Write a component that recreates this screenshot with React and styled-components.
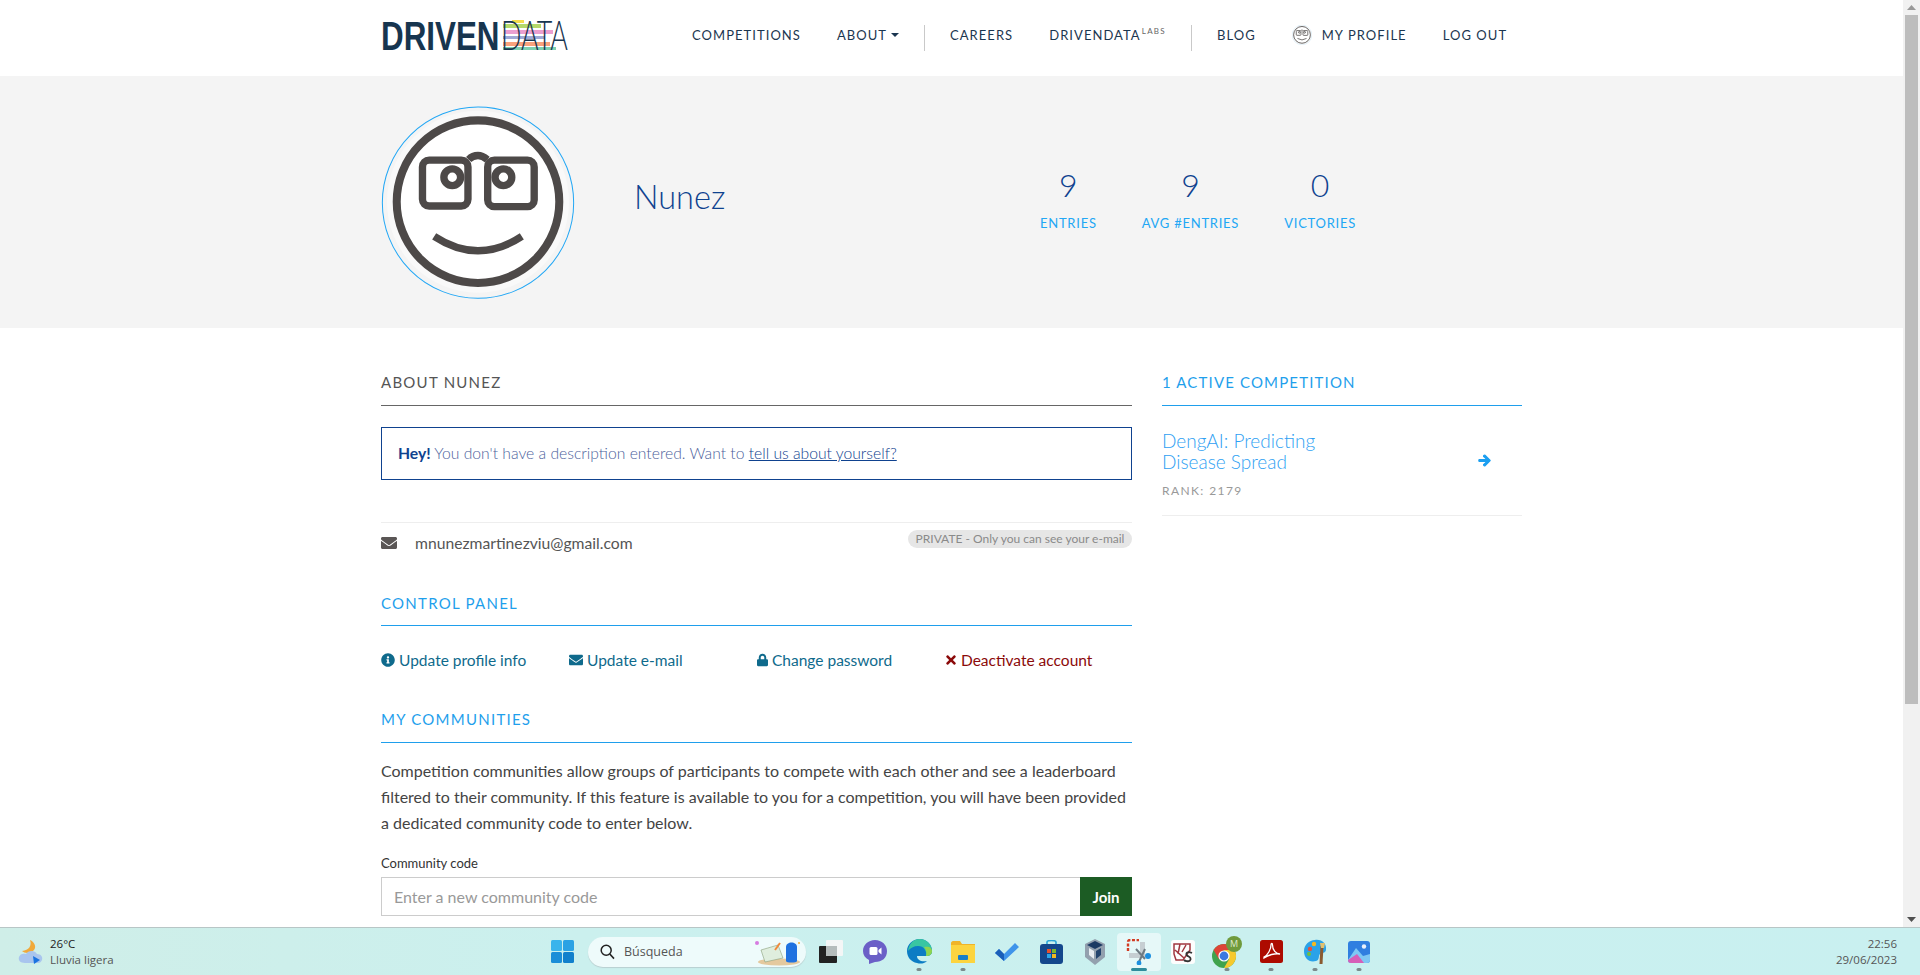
import React from 'react'
import styled, { createGlobalStyle } from 'styled-components'
import { FaEnvelope, FaInfoCircle, FaLock, FaTimes, FaArrowRight } from 'react-icons/fa'

const GlobalStyle = createGlobalStyle`
  html, body {
    margin: 0;
    padding: 0;
    height: 100%;
    overflow: hidden;
    background: #fff;
  }
  #root { height: 100%; }
  * { box-sizing: border-box; }
`

const BASE_FONT = `Lato, "Open Sans", sans-serif`
const WIN_FONT = `"Open Sans", "Noto Sans", sans-serif`

const Screen = styled.div`
  height: 975px;
  display: flex;
  flex-direction: column;
  font-family: ${BASE_FONT};
`
const Viewport = styled.div`
  height: 927px;
  display: flex;
`
const Page = styled.div`
  flex: 1;
  overflow: hidden;
`

/* fake scrollbar */
const ScrollTrack = styled.div`
  width: 17px;
  background: #f1f1f1;
  display: flex;
  flex-direction: column;
  align-items: stretch;
`
const ScrollArrow = styled.div`
  height: 15px;
  display: flex;
  align-items: center;
  justify-content: center;
  svg { display: block; fill: ${p => p.$color}; }
`
const ScrollThumb = styled.div`
  height: 689px;
  margin: 0 2px;
  background: #bdbdbd;
`
const ScrollRest = styled.div`
  flex: 1;
`

/* nav */
const Nav = styled.nav`
  height: 76px;
  padding: 0 0 6px 381px;
  display: flex;
  align-items: center;
  background: #fff;
`
const NavList = styled.div`
  margin-left: 124px;
  display: flex;
  align-items: center;
  gap: 36px;
`
const NavItem = styled.a`
  display: flex;
  align-items: center;
  gap: ${p => p.$gap || 0}px;
  font-size: 13px;
  line-height: 20px;
  letter-spacing: 1.05px;
  color: #1b3650;
  white-space: nowrap;
`
const Caret = styled.span`
  display: inline-block;
  margin-left: 4px;
  width: 0;
  height: 0;
  border-left: 4px solid transparent;
  border-right: 4px solid transparent;
  border-top: 4px solid #1b3650;
`
const LabsMark = styled.sup`
  font-size: 8px;
  line-height: 8px;
  letter-spacing: 1.3px;
  color: #666;
  margin: -9px 0 0 1px;
`
const NavDivider = styled.span`
  width: 1px;
  height: 26px;
  margin: 6px -11px 0;
  background: #c9c9c9;
`

/* hero */
const Hero = styled.section`
  height: 252px;
  background: #f4f4f4;
  padding-left: 381px;
  display: flex;
  align-items: flex-start;
`
const AvatarWrap = styled.div`
  width: 194px;
  height: 194px;
  margin-top: 30px;
  svg { display: block; }
`
const UserName = styled.h1`
  margin: 98px 0 0 59px;
  width: 406px;
  font-size: 32.5px;
  line-height: 46px;
  font-weight: 300;
  color: #0f428f;
`
const Stats = styled.div`
  margin-top: 89px;
  display: flex;
  gap: 45px;
`
const Stat = styled.div`
  display: flex;
  flex-direction: column;
  align-items: center;
`
const StatValue = styled.div`
  font-size: 32px;
  line-height: 40px;
  font-weight: 300;
  color: #0f428f;
`
const StatLabel = styled.div`
  margin-top: 9px;
  font-size: 13px;
  line-height: 18px;
  letter-spacing: 0.75px;
  color: #22a7f5;
  white-space: nowrap;
`

/* content columns */
const Columns = styled.div`
  padding-left: 381px;
  display: grid;
  grid-template-columns: 751px 360px;
  column-gap: 30px;
`
const Column = styled.div`
  min-width: 0;
`
const SectionHead = styled.h2`
  margin: ${p => p.$top}px 0 0;
  padding-bottom: ${p => p.$pad || 10}px;
  border-bottom: 1px solid ${p => (p.$muted ? '#666' : '#1f9fec')};
  font-size: 15px;
  line-height: 26px;
  font-weight: 400;
  letter-spacing: ${p => p.$spacing || 1.25}px;
  color: ${p => (p.$muted ? '#555' : '#1f9fec')};
`
const Notice = styled.div`
  margin-top: 21px;
  height: 53px;
  padding: 0 0 2px 16px;
  display: flex;
  align-items: center;
  border: 1px solid #0f428f;
  font-size: 15.7px;
  font-weight: 300;
  color: #4d5f9c;
  white-space: pre;
  strong { font-weight: 700; color: #0f428f; }
  a { color: #0f428f; text-decoration: underline; }
`
const EmailRow = styled.div`
  margin-top: 42px;
  height: 44px;
  border-top: 1px solid #eee;
  display: flex;
  align-items: flex-start;
  justify-content: space-between;
`
const EmailAddress = styled.div`
  margin-top: 9px;
  display: flex;
  align-items: center;
  gap: 18px;
  font-size: 15.7px;
  line-height: 22px;
  color: #555;
  svg { width: 16px; height: 16px; color: #5a5655; }
`
const PrivateBadge = styled.span`
  margin-top: 7px;
  height: 18px;
  width: 224px;
  border-radius: 9px;
  background: #e6e6e6;
  font-size: 12px;
  line-height: 18px;
  text-align: center;
  color: #8a8a8a;
  white-space: nowrap;
`
const ControlLinks = styled.div`
  margin-top: 23px;
  display: grid;
  grid-template-columns: repeat(4, 188px);
`
const ControlLink = styled.a`
  height: 22px;
  display: flex;
  align-items: center;
  gap: 4px;
  font-size: 15.5px;
  color: ${p => (p.$danger ? '#8b0a0a' : '#0f6a8c')};
  white-space: nowrap;
  svg { width: ${p => p.$icon || 14}px; height: 14px; flex: none; }
`
const Paragraph = styled.p`
  margin: 15px 0 0;
  font-size: 16px;
  line-height: 26px;
  color: #444;
  white-space: nowrap;
`
const FieldLabel = styled.label`
  display: block;
  margin-top: 18px;
  font-size: 13px;
  line-height: 18px;
  color: #333;
`
const JoinRow = styled.div`
  margin-top: 5px;
  display: flex;
  height: 39px;
`
const CodeInput = styled.input`
  flex: 1;
  min-width: 0;
  padding: 0 12px;
  border: 1px solid #ccc;
  border-right: 0;
  outline: 0;
  font-family: ${BASE_FONT};
  font-size: 16px;
  color: #333;
  &::placeholder { color: #999; opacity: 1; }
`
const JoinButton = styled.button`
  width: 52px;
  border: 0;
  background: #1c5c24;
  color: #fff;
  font-family: ${BASE_FONT};
  font-size: 15px;
  font-weight: 700;
`

/* side */
const CompetitionItem = styled.div`
  margin-top: 24px;
  padding-bottom: 16px;
  border-bottom: 1px solid #eee;
  display: flex;
`
const CompetitionText = styled.div`
  width: 316px;
`
const CompetitionTitle = styled.a`
  display: block;
  font-size: 19px;
  line-height: 21px;
  font-weight: 300;
  color: #2f9ff3;
`
const Rank = styled.div`
  margin-top: 11px;
  font-size: 12px;
  line-height: 16px;
  letter-spacing: 1.4px;
  color: #999;
`
const GoArrow = styled(FaArrowRight)`
  width: 13px;
  height: 13px;
  margin-top: 24px;
  color: #1c9ff0;
  stroke: currentColor;
  stroke-width: 40;
`

/* windows taskbar */
const Taskbar = styled.footer`
  height: 48px;
  border-top: 1px solid #b8c6c6;
  background: linear-gradient(90deg, #cfeee8 0%, #cbf0ee 30%, #c9f0f0 100%);
  display: grid;
  grid-template-columns: 540px 1fr 140px;
  align-items: center;
  font-family: ${WIN_FONT};
`
const Weather = styled.div`
  padding-left: 18px;
  display: flex;
  align-items: center;
  gap: 6px;
  svg { display: block; }
`
const TrayText = styled.div`
  font-size: 11.5px;
  line-height: 16px;
  color: ${p => (p.$dark ? '#222' : '#555')};
`
const TaskIcons = styled.div`
  height: 100%;
  display: flex;
  align-items: center;
`
const TaskButton = styled.div`
  position: relative;
  width: 44px;
  height: 38px;
  display: flex;
  align-items: center;
  justify-content: center;
  border-radius: 4px;
  background: ${p => (p.$active ? '#e6f8f8' : 'transparent')};
  svg { display: block; }
  &::after {
    content: '';
    display: ${p => (p.$dot || p.$active ? 'block' : 'none')};
    position: absolute;
    left: 50%;
    bottom: 0;
    transform: translateX(-50%);
    width: ${p => (p.$active ? 16 : 5)}px;
    height: 3px;
    border-radius: 2px;
    background: ${p => (p.$active ? '#2e8c9c' : '#7b8a8c')};
  }
`
const SearchBox = styled.div`
  width: 218px;
  height: 30px;
  margin: 0 3px 0 4px;
  padding: 0 5px 0 12px;
  border-radius: 15px;
  background: #eefbfb;
  box-shadow: 0 1px 1px #b9cfd0;
  display: flex;
  align-items: center;
  font-size: 12.5px;
  color: #555;
  svg { display: block; flex: none; }
`
const SearchLabel = styled.span`
  margin-left: 9px;
  flex: 1;
`
const Clock = styled.div`
  padding-right: 23px;
  text-align: right;
`

const Avatar = ({ size }) => (
  <svg width={size} height={size} viewBox="34 32 580 580">
    <circle cx="324" cy="321" r="286" fill="#f4f4f4" stroke="#22a7f5" strokeWidth="3" />
    <circle cx="324" cy="318" r="272" fill="#f9f9f9" />
    <circle cx="324" cy="318" r="243" fill="#fff" stroke="#4d4948" strokeWidth="24" />
    <g fill="none" stroke="#4d4948" strokeWidth="22">
      <rect x="158" y="194" width="136" height="137" rx="20" />
      <rect x="353" y="194" width="139" height="139" rx="20" />
      <path d="M296 192 C306 182 316 180 324 180 C334 180 342 184 352 192" />
      <circle cx="247" cy="245" r="25" fill="#fff" />
      <circle cx="400" cy="245" r="25" fill="#fff" />
      <path d="M193 422 Q324 508 455 422" />
    </g>
  </svg>
)

const Logo = () => (
  <svg width="187" height="30" viewBox="0 0 187 30">
    <rect x="131" y="0" width="12" height="3" fill="#f5dc4c" />
    <rect x="122" y="4" width="38" height="4" fill="#b5d96b" />
    <rect x="124" y="10" width="48" height="4" fill="#ea9fd0" />
    <rect x="122" y="16" width="42" height="3" fill="#9fa9d6" />
    <rect x="122" y="22" width="47" height="4" fill="#f9a27c" />
    <rect x="122" y="27" width="53" height="3" fill="#7fd0b0" />
    <text transform="translate(0 30) scale(.765 1)" fontFamily="Liberation Sans" fontWeight="700" fontSize="41" fill="#17354f">DRIVEN</text>
    <text transform="translate(120 30) scale(.655 1)" fontFamily="Lato" fontWeight="300" fontSize="41" fill="#17354f">DATA</text>
  </svg>
)

const WeatherIcon = () => (
  <svg width="26" height="26" viewBox="0 0 26 26">
    <path d="M12 1 C14 7 11 11 4 12 C7 15 15 15 17 9 C18 6 15 2 12 1Z" fill="#f0a93a" />
    <path d="M7 24 C2 24 0 21 1 18 C2 15 5 14 8 15 C10 11 17 11 19 15 C23 15 25 18 24 21 C23 23 22 24 20 24Z" fill="#a9c5ee" />
    <path d="M15 17 L22 21 L16 25Z" fill="#1a73e0" />
  </svg>
)
const WindowsIcon = () => (
  <svg width="23" height="23" viewBox="0 0 23 23">
    <rect width="11" height="11" rx="1.5" fill="#3ab4ec" />
    <rect x="12" width="11" height="11" rx="1.5" fill="#2aa2e4" />
    <rect y="12" width="11" height="11" rx="1.5" fill="#1b8ed8" />
    <rect x="12" y="12" width="11" height="11" rx="1.5" fill="#1080cc" />
  </svg>
)
const SearchGlyph = () => (
  <svg width="15" height="16" viewBox="0 0 15 16">
    <circle cx="6.2" cy="6.2" r="5" fill="none" stroke="#222" strokeWidth="1.5" />
    <path d="M9.8 10 L14 14.6" stroke="#222" strokeWidth="1.6" />
  </svg>
)
const SearchArt = () => (
  <svg width="46" height="28" viewBox="0 0 46 28">
    <ellipse cx="24" cy="24" rx="21" ry="3.5" fill="#e4c99e" />
    <path d="M6 12 L23 7 L28 20 L10 24Z" fill="#dfeede" stroke="#8aa07a" strokeWidth=".6" />
    <path d="M20 12 L25 5" stroke="#f08a3c" strokeWidth="2" />
    <path d="M31 9 C31 3 42 3 42 9 V23 C42 25 31 25 31 23Z" fill="#1f72e0" />
    <circle cx="2" cy="5" r="2" fill="#d67be0" />
    <circle cx="44" cy="5" r="1" fill="#f4b53c" />
  </svg>
)
const TaskViewIcon = () => (
  <svg width="24" height="23" viewBox="0 0 24 23">
    <rect x="7" y="0" width="17" height="16" rx="1" fill="#f4f6f6" />
    <rect x="0" y="6" width="18" height="17" rx="1" fill="#222" />
    <rect x="7" y="6" width="11" height="10" fill="#b5bcbc" />
  </svg>
)
const MeetIcon = () => (
  <svg width="24" height="24" viewBox="0 0 24 24">
    <path d="M12 0 C19 0 24 5 24 11 C24 18 19 22 12 22 L6 24 V20 C2 18 0 15 0 11 C0 5 5 0 12 0Z" fill="#6b5fc7" />
    <rect x="6.5" y="7" width="8" height="8" rx="1.5" fill="#fff" />
    <path d="M15.5 10 L18.5 7.5 V14.5 L15.5 12Z" fill="#fff" />
  </svg>
)
const EdgeIcon = () => (
  <svg width="25" height="25" viewBox="0 0 25 25">
    <path d="M12.5 0 C20 0 25 6 25 12 C25 16 22 17 19 17 H10 C10 21 14 23 20 22 C17 25 13 25 10 24 C4 23 0 18 0 12 C0 5 6 0 12.5 0Z" fill="#0c7cc4" />
    <path d="M12.5 0 C20 0 25 6 25 12 C25 16 22 17 19 17 C20 12 17 7 11 7 C7 7 3 9 1 12 C2 5 6 0 12.5 0Z" fill="#39c6a2" />
    <path d="M25 12 C25 16 22 17 19 17 C20 14 19 10 17 8 C21 7 25 8 25 12Z" fill="#8fd44f" />
  </svg>
)
const FolderIcon = () => (
  <svg width="24" height="22" viewBox="0 0 24 22">
    <path d="M0 2 C0 1 1 0 2 0 H9 L11 3 H24 V22 H0Z" fill="#f0b429" />
    <rect y="4" width="24" height="18" fill="#fcd43f" />
    <rect x="7" y="14" width="10" height="5" rx="1" fill="#1a7fc8" />
  </svg>
)
const TodoIcon = () => (
  <svg width="24" height="18" viewBox="0 0 24 18">
    <path d="M0 10 L4 6 L9 11 L20 0 L24 4 L9 18Z" fill="#3f94ea" />
    <path d="M0 10 L4 6 L9 11 L9 18Z" fill="#1b5fb8" />
  </svg>
)
const StoreIcon = () => (
  <svg width="23" height="24" viewBox="0 0 23 24">
    <path d="M7 5 V2 C7 0 16 0 16 2 V5" fill="none" stroke="#2ba5d8" strokeWidth="1.6" />
    <rect y="4" width="23" height="20" rx="3" fill="#14478c" />
    <rect x="7" y="9" width="4" height="4" fill="#e8502c" />
    <rect x="12" y="9" width="4" height="4" fill="#7cb82c" />
    <rect x="7" y="14" width="4" height="4" fill="#2ba5e8" />
    <rect x="12" y="14" width="4" height="4" fill="#f4b820" />
  </svg>
)
const VBoxIcon = () => (
  <svg width="20" height="26" viewBox="0 0 20 26">
    <path d="M10 0 L20 5 V18 L10 26 L0 18 V5Z" fill="#93a0ae" />
    <path d="M10 2 L18 6 L10 10 L2 6Z" fill="#1c3a63" />
    <path d="M4 9 L9 12 V20 L4 16Z" fill="#e8edf2" />
    <path d="M16 9 L11 12 V20 L16 16Z" fill="#24446e" />
  </svg>
)
const SnipIcon = () => (
  <svg width="26" height="26" viewBox="0 0 26 26">
    <path d="M2 12 V3 Q2 1 4 1 H13" fill="none" stroke="#d23b22" strokeWidth="2.4" strokeDasharray="3 1.6" />
    <path d="M3 14 H14 V3 H19 V19 H3Z" fill="#c6ced2" />
    <path d="M10 10 L19 20 M19 10 L12 25" stroke="#6e7a82" strokeWidth="2" />
    <circle cx="22" cy="17" r="3" fill="#1c8fe0" />
    <circle cx="13" cy="24" r="2.4" fill="#1c8fe0" />
  </svg>
)
const KsIcon = () => (
  <svg width="24" height="24" viewBox="0 0 24 24">
    <rect width="24" height="24" rx="3" fill="#fdfdfd" />
    <path d="M3 4 H19 V10 L12 20 H5 L3 14Z M4 10 L13 18 M9 4 L7 14 M15 5 L11 12" fill="none" stroke="#a0363f" strokeWidth="1.5" />
    <path d="M21 13 C17 11 14 13 16 15.5 C18 17 21 18 19 20.5 C17 22 14 21 13 20" fill="none" stroke="#333" strokeWidth="1.8" />
  </svg>
)
const ChromeIcon = () => (
  <svg width="30" height="32" viewBox="0 0 30 32">
    <circle cx="12" cy="20" r="12" fill="#3fa34d" />
    <path d="M12 8 A12 12 0 0 1 22.4 14 L12 14 L6.8 23 L1.6 14 A12 12 0 0 1 12 8Z" fill="#dd4436" />
    <path d="M22.4 14 A12 12 0 0 1 12 32 L17.2 23 L12 14Z" fill="#f6c92e" />
    <circle cx="12" cy="20" r="5.6" fill="#fff" />
    <circle cx="12" cy="20" r="4.4" fill="#3c78e0" />
    <circle cx="22" cy="8" r="8" fill="#6f9a3c" />
    <text x="22" y="11" textAnchor="middle" fontSize="9" fontFamily="Open Sans" fill="#dfe8cc">M</text>
  </svg>
)
const AcrobatIcon = () => (
  <svg width="23" height="23" viewBox="0 0 23 23">
    <rect width="23" height="23" rx="2.5" fill="#ad0b00" />
    <path d="M4 17 C8 15 11 9 11 5 C11 3 12.5 3 12.5 5 C12.5 10 16 14 20 14 C15 13 8 15 4 18Z" fill="none" stroke="#fff" strokeWidth="1.3" />
  </svg>
)
const PaintIcon = () => (
  <svg width="23" height="25" viewBox="0 0 23 25">
    <path d="M11 1 C18 0 23 5 22 11 C21 15 18 13 16 15 C14 17 16 21 12 22 C5 24 0 19 0 12 C0 6 5 1 11 1Z" fill="#2aa2e8" />
    <circle cx="6" cy="10" r="2.2" fill="#e84f3c" />
    <circle cx="10" cy="5" r="2.2" fill="#f4b820" />
    <circle cx="5" cy="15" r="2" fill="#6fc03c" />
    <path d="M18 7 L17 25" stroke="#8a5a30" strokeWidth="3" />
    <path d="M16 4 H21 L20 9 H17Z" fill="#e0c070" />
  </svg>
)
const PhotosIcon = () => (
  <svg width="22" height="22" viewBox="0 0 22 22">
    <rect width="22" height="22" rx="3" fill="#2f7fe0" />
    <circle cx="16" cy="5.5" r="2.2" fill="#e8f0fb" />
    <path d="M0 19 L8 7 L15 15 L22 13 V19 Q22 22 19 22 H3 Q0 22 0 19Z" fill="#7ec8f4" />
    <path d="M0 19 L9 13 L16 22 H3 Q0 22 0 19Z" fill="#d65fb8" />
  </svg>
)

const TASK_ICONS = [
  { Icon: TaskViewIcon },
  { Icon: MeetIcon },
  { Icon: EdgeIcon, dot: true },
  { Icon: FolderIcon, dot: true },
  { Icon: TodoIcon },
  { Icon: StoreIcon },
  { Icon: VBoxIcon },
  { Icon: SnipIcon, active: true },
  { Icon: KsIcon },
  { Icon: ChromeIcon, dot: true },
  { Icon: AcrobatIcon, dot: true },
  { Icon: PaintIcon, dot: true },
  { Icon: PhotosIcon, dot: true },
]

const STATS = [
  { value: 9, label: 'ENTRIES' },
  { value: 9, label: 'AVG #ENTRIES' },
  { value: 0, label: 'VICTORIES' },
]

export default function App() {
  return (
    <Screen>
      <GlobalStyle />
      <Viewport>
        <Page>
          <Nav>
            <Logo />
            <NavList>
              <NavItem>COMPETITIONS</NavItem>
              <NavItem>ABOUT<Caret /></NavItem>
              <NavDivider />
              <NavItem>CAREERS</NavItem>
              <NavItem>DRIVENDATA<LabsMark>LABS</LabsMark></NavItem>
              <NavDivider />
              <NavItem>BLOG</NavItem>
              <NavItem $gap={10}><Avatar size={20} />MY PROFILE</NavItem>
              <NavItem>LOG OUT</NavItem>
            </NavList>
          </Nav>
          <Hero>
            <AvatarWrap><Avatar size={194} /></AvatarWrap>
            <UserName>Nunez</UserName>
            <Stats>
              {STATS.map(stat => (
                <Stat key={stat.label}>
                  <StatValue>{stat.value}</StatValue>
                  <StatLabel>{stat.label}</StatLabel>
                </Stat>
              ))}
            </Stats>
          </Hero>
          <Columns>
            <Column>
              <SectionHead $top={41} $muted>ABOUT NUNEZ</SectionHead>
              <Notice>
                <strong>Hey!</strong> You don't have a description entered. Want to <a>tell us about yourself?</a>
              </Notice>
              <EmailRow>
                <EmailAddress><FaEnvelope />mnunezmartinezviu@gmail.com</EmailAddress>
                <PrivateBadge>PRIVATE - Only you can see your e-mail</PrivateBadge>
              </EmailRow>
              <SectionHead $top={24} $pad={9}>CONTROL PANEL</SectionHead>
              <ControlLinks>
                <ControlLink><FaInfoCircle />Update profile info</ControlLink>
                <ControlLink><FaEnvelope />Update e-mail</ControlLink>
                <ControlLink $icon={11}><FaLock />Change password</ControlLink>
                <ControlLink $danger $icon={12}><FaTimes />Deactivate account</ControlLink>
              </ControlLinks>
              <SectionHead $top={35}>MY COMMUNITIES</SectionHead>
              <Paragraph>
                Competition communities allow groups of participants to compete with each other and see a leaderboard<br />
                filtered to their community. If this feature is available to you for a competition, you will have been provided<br />
                a dedicated community code to enter below.
              </Paragraph>
              <FieldLabel>Community code</FieldLabel>
              <JoinRow>
                <CodeInput placeholder="Enter a new community code" />
                <JoinButton>Join</JoinButton>
              </JoinRow>
            </Column>
            <Column>
              <SectionHead $top={41} $spacing={1.15}>1 ACTIVE COMPETITION</SectionHead>
              <CompetitionItem>
                <CompetitionText>
                  <CompetitionTitle>DengAI: Predicting<br />Disease Spread</CompetitionTitle>
                  <Rank>RANK: 2179</Rank>
                </CompetitionText>
                <GoArrow />
              </CompetitionItem>
            </Column>
          </Columns>
        </Page>
        <ScrollTrack>
          <ScrollArrow $color="#999">
            <svg width="9" height="5" viewBox="0 0 9 5"><path d="M4.5 0 L9 5 H0Z" /></svg>
          </ScrollArrow>
          <ScrollThumb />
          <ScrollRest />
          <ScrollArrow $color="#505050">
            <svg width="9" height="5" viewBox="0 0 9 5"><path d="M0 0 H9 L4.5 5Z" /></svg>
          </ScrollArrow>
        </ScrollTrack>
      </Viewport>
      <Taskbar>
        <Weather>
          <WeatherIcon />
          <div>
            <TrayText $dark>26°C</TrayText>
            <TrayText>Lluvia ligera</TrayText>
          </div>
        </Weather>
        <TaskIcons>
          <TaskButton><WindowsIcon /></TaskButton>
          <SearchBox>
            <SearchGlyph />
            <SearchLabel>Búsqueda</SearchLabel>
            <SearchArt />
          </SearchBox>
          {TASK_ICONS.map(({ Icon, dot, active }, i) => (
            <TaskButton key={i} $dot={dot} $active={active}><Icon /></TaskButton>
          ))}
        </TaskIcons>
        <Clock>
          <TrayText>22:56</TrayText>
          <TrayText>29/06/2023</TrayText>
        </Clock>
      </Taskbar>
    </Screen>
  )
}
